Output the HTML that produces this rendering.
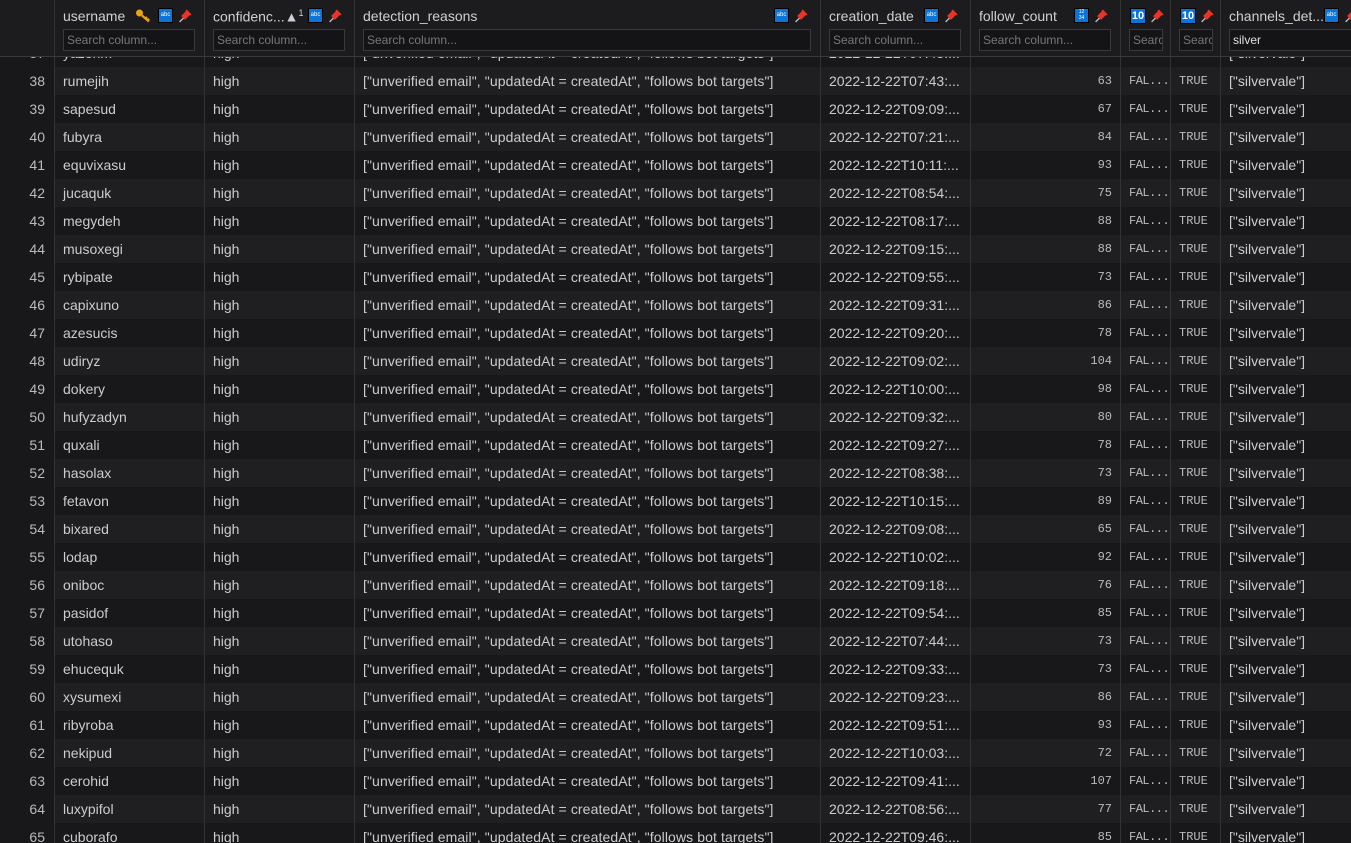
<!DOCTYPE html><html><head><meta charset="utf-8"><style>
*{margin:0;padding:0;box-sizing:border-box}
html,body{width:1351px;height:843px;overflow:hidden}
body{background:#18181a;font-family:"Liberation Sans",sans-serif;font-size:14px;color:#cccccc;position:relative}
.r{position:absolute;left:0;width:1351px;height:28px;background:#18181a}
.r.e{background:#1f1f21}
.r div{position:absolute;top:0;height:28px;line-height:28px;white-space:nowrap;overflow:hidden;border-left:1px solid #333}
.n{left:0;width:54px;text-align:right;padding-right:9px;background:#18181a;border-left:none!important;color:#bbb}
.c1{left:54px;width:150px;padding-left:8px}
.c2{left:204px;width:150px;padding-left:8px}
.c3{left:354px;width:466px;padding-left:8px;letter-spacing:0.1px}
.c4{left:820px;width:150px;padding-left:8px}
.c5{left:970px;width:150px;padding-right:8px;text-align:right;font-family:"Liberation Mono",monospace;font-size:12px;color:#bbb}
.c6{left:1120px;width:50px;padding-left:8px;font-family:"Liberation Mono",monospace;font-size:12px;color:#bbb;letter-spacing:-0.5px}
.c7{left:1170px;width:50px;padding-left:8px;font-family:"Liberation Mono",monospace;font-size:12px;color:#bbb}
.c8{left:1220px;width:131px;padding-left:8px}
.h{position:absolute;top:0;left:0;width:1351px;height:57px;background:#1c1c1e;border-bottom:1px solid #3a3a3a;z-index:5}
.h>div{position:absolute;top:0;height:56px;border-left:1px solid #333}
.h .t{position:absolute;left:8px;top:8px;font-size:14px;color:#d0d0d0}
.h .s{position:absolute;left:8px;top:29px;height:22px;background:#141416;border:1px solid #3a3a3a;font-size:12px;color:#777;padding-left:3px;line-height:20px;overflow:hidden;white-space:nowrap}
.ab{position:absolute;top:8px;width:15px;height:15px;background:#0a74d8;border:1px solid #000;font-size:6px;color:#fff;text-align:center;line-height:13px}
.ten{position:absolute;top:8px;width:16px;height:16px;background:#0a74d8;border:1px solid #000;font-size:11px;font-weight:bold;color:#fff;text-align:center;line-height:14px}
.pin{position:absolute;top:9px;width:14px;height:14px}
</style></head><body>
<div class="r" style="top:39px"><div class="n">37</div><div class="c1">yazorim</div><div class="c2">high</div><div class="c3">["unverified email", "updatedAt = createdAt", "follows bot targets"]</div><div class="c4">2022-12-22T07:43:...</div><div class="c5">81</div><div class="c6">FAL...</div><div class="c7">TRUE</div><div class="c8">["silvervale"]</div></div>
<div class="r e" style="top:67px"><div class="n">38</div><div class="c1">rumejih</div><div class="c2">high</div><div class="c3">["unverified email", "updatedAt = createdAt", "follows bot targets"]</div><div class="c4">2022-12-22T07:43:...</div><div class="c5">63</div><div class="c6">FAL...</div><div class="c7">TRUE</div><div class="c8">["silvervale"]</div></div>
<div class="r" style="top:95px"><div class="n">39</div><div class="c1">sapesud</div><div class="c2">high</div><div class="c3">["unverified email", "updatedAt = createdAt", "follows bot targets"]</div><div class="c4">2022-12-22T09:09:...</div><div class="c5">67</div><div class="c6">FAL...</div><div class="c7">TRUE</div><div class="c8">["silvervale"]</div></div>
<div class="r e" style="top:123px"><div class="n">40</div><div class="c1">fubyra</div><div class="c2">high</div><div class="c3">["unverified email", "updatedAt = createdAt", "follows bot targets"]</div><div class="c4">2022-12-22T07:21:...</div><div class="c5">84</div><div class="c6">FAL...</div><div class="c7">TRUE</div><div class="c8">["silvervale"]</div></div>
<div class="r" style="top:151px"><div class="n">41</div><div class="c1">equvixasu</div><div class="c2">high</div><div class="c3">["unverified email", "updatedAt = createdAt", "follows bot targets"]</div><div class="c4">2022-12-22T10:11:...</div><div class="c5">93</div><div class="c6">FAL...</div><div class="c7">TRUE</div><div class="c8">["silvervale"]</div></div>
<div class="r e" style="top:179px"><div class="n">42</div><div class="c1">jucaquk</div><div class="c2">high</div><div class="c3">["unverified email", "updatedAt = createdAt", "follows bot targets"]</div><div class="c4">2022-12-22T08:54:...</div><div class="c5">75</div><div class="c6">FAL...</div><div class="c7">TRUE</div><div class="c8">["silvervale"]</div></div>
<div class="r" style="top:207px"><div class="n">43</div><div class="c1">megydeh</div><div class="c2">high</div><div class="c3">["unverified email", "updatedAt = createdAt", "follows bot targets"]</div><div class="c4">2022-12-22T08:17:...</div><div class="c5">88</div><div class="c6">FAL...</div><div class="c7">TRUE</div><div class="c8">["silvervale"]</div></div>
<div class="r e" style="top:235px"><div class="n">44</div><div class="c1">musoxegi</div><div class="c2">high</div><div class="c3">["unverified email", "updatedAt = createdAt", "follows bot targets"]</div><div class="c4">2022-12-22T09:15:...</div><div class="c5">88</div><div class="c6">FAL...</div><div class="c7">TRUE</div><div class="c8">["silvervale"]</div></div>
<div class="r" style="top:263px"><div class="n">45</div><div class="c1">rybipate</div><div class="c2">high</div><div class="c3">["unverified email", "updatedAt = createdAt", "follows bot targets"]</div><div class="c4">2022-12-22T09:55:...</div><div class="c5">73</div><div class="c6">FAL...</div><div class="c7">TRUE</div><div class="c8">["silvervale"]</div></div>
<div class="r e" style="top:291px"><div class="n">46</div><div class="c1">capixuno</div><div class="c2">high</div><div class="c3">["unverified email", "updatedAt = createdAt", "follows bot targets"]</div><div class="c4">2022-12-22T09:31:...</div><div class="c5">86</div><div class="c6">FAL...</div><div class="c7">TRUE</div><div class="c8">["silvervale"]</div></div>
<div class="r" style="top:319px"><div class="n">47</div><div class="c1">azesucis</div><div class="c2">high</div><div class="c3">["unverified email", "updatedAt = createdAt", "follows bot targets"]</div><div class="c4">2022-12-22T09:20:...</div><div class="c5">78</div><div class="c6">FAL...</div><div class="c7">TRUE</div><div class="c8">["silvervale"]</div></div>
<div class="r e" style="top:347px"><div class="n">48</div><div class="c1">udiryz</div><div class="c2">high</div><div class="c3">["unverified email", "updatedAt = createdAt", "follows bot targets"]</div><div class="c4">2022-12-22T09:02:...</div><div class="c5">104</div><div class="c6">FAL...</div><div class="c7">TRUE</div><div class="c8">["silvervale"]</div></div>
<div class="r" style="top:375px"><div class="n">49</div><div class="c1">dokery</div><div class="c2">high</div><div class="c3">["unverified email", "updatedAt = createdAt", "follows bot targets"]</div><div class="c4">2022-12-22T10:00:...</div><div class="c5">98</div><div class="c6">FAL...</div><div class="c7">TRUE</div><div class="c8">["silvervale"]</div></div>
<div class="r e" style="top:403px"><div class="n">50</div><div class="c1">hufyzadyn</div><div class="c2">high</div><div class="c3">["unverified email", "updatedAt = createdAt", "follows bot targets"]</div><div class="c4">2022-12-22T09:32:...</div><div class="c5">80</div><div class="c6">FAL...</div><div class="c7">TRUE</div><div class="c8">["silvervale"]</div></div>
<div class="r" style="top:431px"><div class="n">51</div><div class="c1">quxali</div><div class="c2">high</div><div class="c3">["unverified email", "updatedAt = createdAt", "follows bot targets"]</div><div class="c4">2022-12-22T09:27:...</div><div class="c5">78</div><div class="c6">FAL...</div><div class="c7">TRUE</div><div class="c8">["silvervale"]</div></div>
<div class="r e" style="top:459px"><div class="n">52</div><div class="c1">hasolax</div><div class="c2">high</div><div class="c3">["unverified email", "updatedAt = createdAt", "follows bot targets"]</div><div class="c4">2022-12-22T08:38:...</div><div class="c5">73</div><div class="c6">FAL...</div><div class="c7">TRUE</div><div class="c8">["silvervale"]</div></div>
<div class="r" style="top:487px"><div class="n">53</div><div class="c1">fetavon</div><div class="c2">high</div><div class="c3">["unverified email", "updatedAt = createdAt", "follows bot targets"]</div><div class="c4">2022-12-22T10:15:...</div><div class="c5">89</div><div class="c6">FAL...</div><div class="c7">TRUE</div><div class="c8">["silvervale"]</div></div>
<div class="r e" style="top:515px"><div class="n">54</div><div class="c1">bixared</div><div class="c2">high</div><div class="c3">["unverified email", "updatedAt = createdAt", "follows bot targets"]</div><div class="c4">2022-12-22T09:08:...</div><div class="c5">65</div><div class="c6">FAL...</div><div class="c7">TRUE</div><div class="c8">["silvervale"]</div></div>
<div class="r" style="top:543px"><div class="n">55</div><div class="c1">lodap</div><div class="c2">high</div><div class="c3">["unverified email", "updatedAt = createdAt", "follows bot targets"]</div><div class="c4">2022-12-22T10:02:...</div><div class="c5">92</div><div class="c6">FAL...</div><div class="c7">TRUE</div><div class="c8">["silvervale"]</div></div>
<div class="r e" style="top:571px"><div class="n">56</div><div class="c1">oniboc</div><div class="c2">high</div><div class="c3">["unverified email", "updatedAt = createdAt", "follows bot targets"]</div><div class="c4">2022-12-22T09:18:...</div><div class="c5">76</div><div class="c6">FAL...</div><div class="c7">TRUE</div><div class="c8">["silvervale"]</div></div>
<div class="r" style="top:599px"><div class="n">57</div><div class="c1">pasidof</div><div class="c2">high</div><div class="c3">["unverified email", "updatedAt = createdAt", "follows bot targets"]</div><div class="c4">2022-12-22T09:54:...</div><div class="c5">85</div><div class="c6">FAL...</div><div class="c7">TRUE</div><div class="c8">["silvervale"]</div></div>
<div class="r e" style="top:627px"><div class="n">58</div><div class="c1">utohaso</div><div class="c2">high</div><div class="c3">["unverified email", "updatedAt = createdAt", "follows bot targets"]</div><div class="c4">2022-12-22T07:44:...</div><div class="c5">73</div><div class="c6">FAL...</div><div class="c7">TRUE</div><div class="c8">["silvervale"]</div></div>
<div class="r" style="top:655px"><div class="n">59</div><div class="c1">ehucequk</div><div class="c2">high</div><div class="c3">["unverified email", "updatedAt = createdAt", "follows bot targets"]</div><div class="c4">2022-12-22T09:33:...</div><div class="c5">73</div><div class="c6">FAL...</div><div class="c7">TRUE</div><div class="c8">["silvervale"]</div></div>
<div class="r e" style="top:683px"><div class="n">60</div><div class="c1">xysumexi</div><div class="c2">high</div><div class="c3">["unverified email", "updatedAt = createdAt", "follows bot targets"]</div><div class="c4">2022-12-22T09:23:...</div><div class="c5">86</div><div class="c6">FAL...</div><div class="c7">TRUE</div><div class="c8">["silvervale"]</div></div>
<div class="r" style="top:711px"><div class="n">61</div><div class="c1">ribyroba</div><div class="c2">high</div><div class="c3">["unverified email", "updatedAt = createdAt", "follows bot targets"]</div><div class="c4">2022-12-22T09:51:...</div><div class="c5">93</div><div class="c6">FAL...</div><div class="c7">TRUE</div><div class="c8">["silvervale"]</div></div>
<div class="r e" style="top:739px"><div class="n">62</div><div class="c1">nekipud</div><div class="c2">high</div><div class="c3">["unverified email", "updatedAt = createdAt", "follows bot targets"]</div><div class="c4">2022-12-22T10:03:...</div><div class="c5">72</div><div class="c6">FAL...</div><div class="c7">TRUE</div><div class="c8">["silvervale"]</div></div>
<div class="r" style="top:767px"><div class="n">63</div><div class="c1">cerohid</div><div class="c2">high</div><div class="c3">["unverified email", "updatedAt = createdAt", "follows bot targets"]</div><div class="c4">2022-12-22T09:41:...</div><div class="c5">107</div><div class="c6">FAL...</div><div class="c7">TRUE</div><div class="c8">["silvervale"]</div></div>
<div class="r e" style="top:795px"><div class="n">64</div><div class="c1">luxypifol</div><div class="c2">high</div><div class="c3">["unverified email", "updatedAt = createdAt", "follows bot targets"]</div><div class="c4">2022-12-22T08:56:...</div><div class="c5">77</div><div class="c6">FAL...</div><div class="c7">TRUE</div><div class="c8">["silvervale"]</div></div>
<div class="r" style="top:823px"><div class="n">65</div><div class="c1">cuborafo</div><div class="c2">high</div><div class="c3">["unverified email", "updatedAt = createdAt", "follows bot targets"]</div><div class="c4">2022-12-22T09:46:...</div><div class="c5">85</div><div class="c6">FAL...</div><div class="c7">TRUE</div><div class="c8">["silvervale"]</div></div>

<svg width="0" height="0" style="position:absolute"><defs><symbol id="pin" viewBox="0 0 12 13"><path d="M1 12 L5 8" stroke="#bbb" stroke-width="1.3"/><path d="M3.5 6.5 L8 2 L10.5 4.5 L6 9 Z M7 1 L11.5 5.5" fill="#e8342a" stroke="#e8342a" stroke-width="1.6"/></symbol></defs></svg>
<div class="h">
<div style="left:0;width:54px;border-left:none"></div>
<div style="left:54px;width:150px"><span class="t">username</span>
<svg style="position:absolute;left:80px;top:8px" width="16" height="15" viewBox="0 0 16 14"><circle cx="4.5" cy="4.5" r="3.5" fill="#e8a317"/><path d="M7 7 L14 13 M10.5 10 L12 8.5 M12.5 11.8 L14 10.3" stroke="#e8a317" stroke-width="2.2"/></svg>
<div class="ab" style="left:103px">abc</div><svg class="pin" style="left:123px"><use href="#pin"/></svg>
<div class="s" style="width:132px">Search column...</div></div>
<div style="left:204px;width:150px"><span class="t">confidenc...▲<sup style="font-size:9px">1</sup></span>
<div class="ab" style="left:103px">abc</div><svg class="pin" style="left:123px"><use href="#pin"/></svg>
<div class="s" style="width:132px">Search column...</div></div>
<div style="left:354px;width:466px"><span class="t">detection_reasons</span>
<div class="ab" style="left:419px">abc</div><svg class="pin" style="left:439px"><use href="#pin"/></svg>
<div class="s" style="width:448px">Search column...</div></div>
<div style="left:820px;width:150px"><span class="t">creation_date</span>
<div class="ab" style="left:103px">abc</div><svg class="pin" style="left:123px"><use href="#pin"/></svg>
<div class="s" style="width:132px">Search column...</div></div>
<div style="left:970px;width:150px"><span class="t">follow_count</span>
<div class="ab" style="left:103px;font-size:5px;line-height:6px">12<br>34</div><svg class="pin" style="left:123px"><use href="#pin"/></svg>
<div class="s" style="width:132px">Search column...</div></div>
<div style="left:1120px;width:50px"><div class="ten" style="left:9px">10</div><svg class="pin" style="left:29px"><use href="#pin"/></svg>
<div class="s" style="width:34px">Search</div></div>
<div style="left:1170px;width:50px"><div class="ten" style="left:9px">10</div><svg class="pin" style="left:29px"><use href="#pin"/></svg>
<div class="s" style="width:34px">Search</div></div>
<div style="left:1220px;width:131px"><span class="t">channels_det...</span>
<div class="ab" style="left:103px">abc</div><svg class="pin" style="left:123px"><use href="#pin"/></svg>
<div class="s" style="width:140px;color:#e0e0e0">silver</div></div>
</div>
</body></html>
